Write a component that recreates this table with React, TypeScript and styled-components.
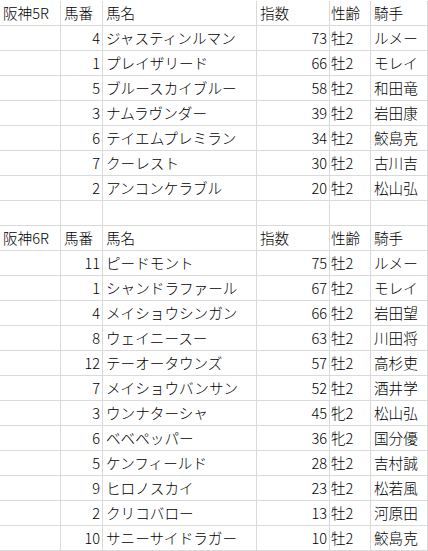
import styled, { createGlobalStyle } from 'styled-components';

const GlobalStyle = createGlobalStyle`
  html, body {
    margin: 0;
    padding: 0;
    background: #ffffff;
  }
  body {
    font-family: 'Noto Sans CJK JP', 'Noto Sans', sans-serif;
    color: #000000;
  }
`;

const Sheet = styled.div`
  width: 428px;
  padding-top: 1px;
`;

const Row = styled.div`
  display: grid;
  grid-template-columns: 61px 42px 154px 73px 41px 57px;
  height: 25px;
`;

const Cell = styled.div<{ align?: 'left' | 'right' }>`
  display: flex;
  align-items: center;
  justify-content: ${({ align }) => (align === 'right' ? 'flex-end' : 'flex-start')};
  padding: ${({ align }) => (align === 'right' ? '0 2px 0 0' : '0 0 0 3px')};
  border-right: 1px solid #dadada;
  border-bottom: 1px solid #dadada;
  font-size: 14.6px;
  font-weight: 300;
  line-height: 1;
  white-space: nowrap;
  overflow: hidden;
`;

const NarrowCell = styled(Cell)`
  padding-left: 1px;
`;

type Entry = [number, string, number, string, string];

interface Race {
  title: string;
  entries: Entry[];
}

const races: Race[] = [
  {
    title: '阪神5R',
    entries: [
      [4, 'ジャスティンルマン', 73, '牡2', 'ルメー'],
      [1, 'プレイザリード', 66, '牡2', 'モレイ'],
      [5, 'ブルースカイブルー', 58, '牡2', '和田竜'],
      [3, 'ナムラヴンダー', 39, '牡2', '岩田康'],
      [6, 'テイエムプレミラン', 34, '牡2', '鮫島克'],
      [7, 'クーレスト', 30, '牡2', '古川吉'],
      [2, 'アンコンケラブル', 20, '牡2', '松山弘'],
    ],
  },
  {
    title: '阪神6R',
    entries: [
      [11, 'ピードモント', 75, '牡2', 'ルメー'],
      [1, 'シャンドラファール', 67, '牡2', 'モレイ'],
      [4, 'メイショウシンガン', 66, '牡2', '岩田望'],
      [8, 'ウェイニースー', 63, '牡2', '川田将'],
      [12, 'テーオータウンズ', 57, '牡2', '高杉吏'],
      [7, 'メイショウバンサン', 52, '牡2', '酒井学'],
      [3, 'ウンナターシャ', 45, '牝2', '松山弘'],
      [6, 'ベベペッパー', 36, '牝2', '国分優'],
      [5, 'ケンフィールド', 28, '牡2', '吉村誠'],
      [9, 'ヒロノスカイ', 23, '牡2', '松若風'],
      [2, 'クリコバロー', 13, '牡2', '河原田'],
      [10, 'サニーサイドラガー', 10, '牡2', '鮫島克'],
    ],
  },
];

const RaceTable = ({ race }: { race: Race }) => (
  <>
    <Row>
      <Cell>{race.title}</Cell>
      <Cell>馬番</Cell>
      <Cell>馬名</Cell>
      <Cell>指数</Cell>
      <NarrowCell>性齢</NarrowCell>
      <Cell>騎手</Cell>
    </Row>
    {race.entries.map(([no, name, score, sexAge, jockey]) => (
      <Row key={no}>
        <Cell />
        <Cell align="right">{no}</Cell>
        <Cell>{name}</Cell>
        <Cell align="right">{score}</Cell>
        <NarrowCell>{sexAge}</NarrowCell>
        <Cell>{jockey}</Cell>
      </Row>
    ))}
  </>
);

export default function App() {
  return (
    <>
      <GlobalStyle />
      <Sheet>
        <RaceTable race={races[0]} />
        <Row>
          <Cell />
          <Cell />
          <Cell />
          <Cell />
          <Cell />
          <Cell />
        </Row>
        <RaceTable race={races[1]} />
      </Sheet>
    </>
  );
}
